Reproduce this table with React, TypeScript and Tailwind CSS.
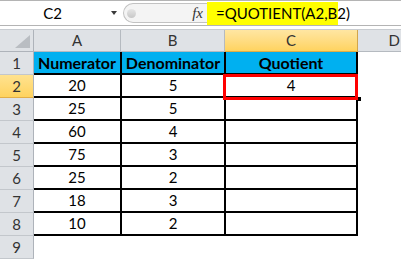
import React from 'react';

const rows = [
  { num: 20, den: 5 },
  { num: 25, den: 5 },
  { num: 60, den: 4 },
  { num: 75, den: 3 },
  { num: 25, den: 2 },
  { num: 18, den: 3 },
  { num: 10, den: 2 },
];

const rowHead = 'w-[34px] h-full flex items-center justify-center border-r border-b border-r-[#aeb3ba] border-b-[#c3c7cc] text-[15px] text-[#333]';
const cell = 'h-full flex items-center justify-center border-r-2 border-b-2 border-black text-[15px] text-black';

const App = () => {
  return (
    <div className="w-[401px] h-[259px] overflow-hidden bg-white relative font-['Lato',sans-serif] leading-none">
      {/* formula bar */}
      <div className="flex h-[26px] border-y border-[#b4b4b4]">
        <div className="w-[123px] flex items-center bg-white">
          <div className="w-[105px] text-center text-[15px] text-black">C2</div>
          <div className="ml-[6px] w-0 h-0 border-x-[3px] border-x-transparent border-t-[4px] border-t-[#3a3a3a]" />
        </div>
        <div className="w-[84px] flex items-center bg-white">
          <div className="h-[20px] flex-1 flex items-center rounded-l-full border-l border-y border-[#c2c2c2] bg-[#f4f4f4]">
            <div className="ml-[3px] w-[9px] h-[9px] rounded-full bg-gradient-to-b from-[#e6e6e6] to-[#c8c8c8]" />
            <div className="ml-auto mr-[4px] font-['Liberation_Serif',serif] italic text-[15px] text-[#333]">fx</div>
          </div>
        </div>
        <div className="flex-1 flex items-stretch bg-white pt-px">
          <div className="bg-[#ffff00] w-[131px] pl-[9px] flex items-center text-[15px] text-black">
            =QUOTIENT(A2,B2)
          </div>
        </div>
      </div>

      {/* column headers */}
      <div className="mt-[3px] flex h-[23px] border-t border-[#c8ccd1] bg-[#dfe2e6]">
        <div className="w-[34px] h-full border-r border-b border-[#aeb3ba] relative">
          <div className="absolute left-[15px] top-[5px] w-0 h-0 border-l-[15px] border-l-transparent border-b-[13px] border-b-[#b9bdc2]" />
        </div>
        <div className="w-[87px] h-full flex items-center justify-center border-r border-b border-[#b5bac0] text-[15px] text-[#333]">A</div>
        <div className="w-[104px] h-full flex items-center justify-center border-r border-b border-[#b5bac0] text-[15px] text-[#333]">B</div>
        <div className="w-[133px] h-full flex items-center justify-center border-r border-b border-r-[#d2a54c] border-b-[#e0ad45] bg-gradient-to-b from-[#ffe6a2] to-[#ffd35e] text-[15px] text-[#333]">C</div>
        <div className="flex-1 h-full flex items-center justify-end pr-[1px] border-b border-[#b5bac0] text-[15px] text-[#333]">D</div>
      </div>

      {/* header row */}
      <div className="flex h-[23px]">
        <div className={`${rowHead} bg-[#dfe2e6]`}>1</div>
        <div className={`${cell} w-[88px] bg-[#00b0f0] font-bold text-[16px]`}>Numerator</div>
        <div className={`${cell} w-[104px] bg-[#00b0f0] font-bold text-[16px]`}>Denominator</div>
        <div className={`${cell} w-[132px] bg-[#00b0f0] font-bold text-[16px]`}>Quotient</div>
      </div>

      {rows.map((r, i) => (
        <div key={i} className="flex h-[23px]">
          <div
            className={`${rowHead} ${
              i === 0 ? 'bg-gradient-to-b from-[#ffe28f] to-[#ffd35e] border-b-[#e2ae47]' : 'bg-[#dfe2e6]'
            }`}
          >
            {i + 2}
          </div>
          <div className={`${cell} w-[88px]`}>{r.num}</div>
          <div className={`${cell} w-[104px]`}>{r.den}</div>
          <div className={`${cell} w-[132px]`}>{i === 0 ? Math.floor(r.num / r.den) : ''}</div>
        </div>
      ))}

      <div className="flex h-[23px]">
        <div className={`${rowHead} bg-[#dfe2e6]`}>9</div>
      </div>

      {/* active cell */}
      <div className="absolute left-[357px] top-[97px] w-[4px] h-[4px] bg-black" />
      <div className="absolute left-[223px] top-[74px] w-[135px] h-[26px] border-[3px] border-[#ff0000]" />
    </div>
  );
};

export default App;
